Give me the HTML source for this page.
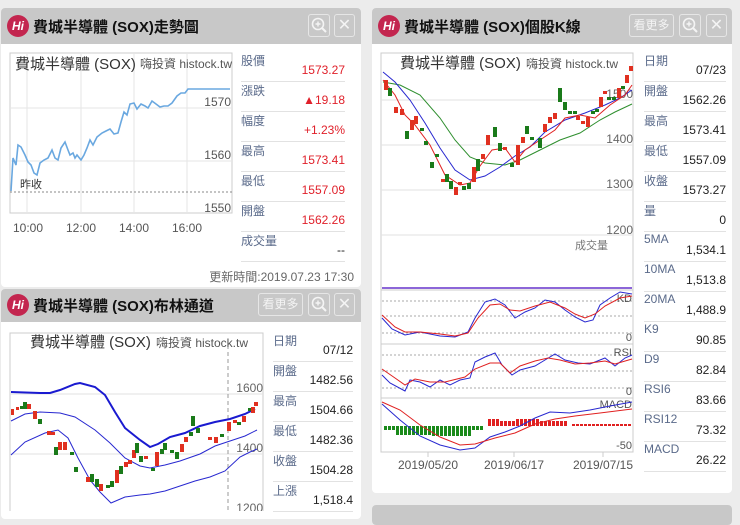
<!DOCTYPE html>
<html><head><meta charset="utf-8"><style>
*{margin:0;padding:0;box-sizing:border-box}
body{width:740px;height:511px;background:#ececec;font-family:"Liberation Sans","Noto Sans CJK TC",sans-serif;position:relative;overflow:hidden}
.p{position:absolute;background:#fff;border-radius:4px;overflow:hidden}
.h{position:absolute;left:0;right:0;top:0;height:36px;background:#c8c8c8}
.t{position:absolute;left:32px;top:8px;font-size:15px;font-weight:bold;color:#111;white-space:nowrap}
.logo{position:absolute;left:6px;top:7px;width:22px;height:22px;border-radius:50%;background:#c3264f;color:#fff;font-size:12px;font-weight:bold;text-align:center;line-height:22px;font-style:italic}
.b{position:absolute;top:6px;height:23px;border:1px solid #e6e6e6;border-radius:3px;color:#f4f4f4;font-size:12px;text-align:center;line-height:21px}
.b svg{position:absolute;left:2px;top:2px}
.a{position:absolute}
.s{position:absolute;font-size:12px}
.l{color:#5a6a8a}
.k{color:#222;text-align:right}
.v{color:#e0202a;text-align:right}
.r{position:relative;height:30px;border-bottom:1px solid #e2e2e2}
body>svg{position:absolute;left:0;top:0}
</style></head><body>

<div class="p" style="left:1px;top:8px;width:360px;height:279px">
<div class="h"></div><div class="logo">Hi</div><div class="t">費城半導體 (SOX)走勢圖</div>
<div class="b" style="left:307px;width:22px"><svg width="17" height="17"><circle cx="7" cy="7" r="5.5" fill="none" stroke="#f4f4f4" stroke-width="1.6"/><line x1="11" y1="11" x2="15" y2="15" stroke="#f4f4f4" stroke-width="2"/><line x1="4.5" y1="7" x2="9.5" y2="7" stroke="#f4f4f4" stroke-width="1.4"/><line x1="7" y1="4.5" x2="7" y2="9.5" stroke="#f4f4f4" stroke-width="1.4"/></svg></div>
<div class="b" style="left:333px;width:21px;font-size:16px">✕</div>
</div>
<div class="p" style="left:1px;top:289px;width:360px;height:230px">
<div class="h" style="height:33px"></div><div class="logo" style="top:5px">Hi</div><div class="t" style="top:6px">費城半導體 (SOX)布林通道</div>
<div class="b" style="left:257px;width:45px;top:4px">看更多</div>
<div class="b" style="left:307px;width:22px;top:4px"><svg width="17" height="17"><circle cx="7" cy="7" r="5.5" fill="none" stroke="#f4f4f4" stroke-width="1.6"/><line x1="11" y1="11" x2="15" y2="15" stroke="#f4f4f4" stroke-width="2"/><line x1="4.5" y1="7" x2="9.5" y2="7" stroke="#f4f4f4" stroke-width="1.4"/><line x1="7" y1="4.5" x2="7" y2="9.5" stroke="#f4f4f4" stroke-width="1.4"/></svg></div>
<div class="b" style="left:333px;width:21px;top:4px;font-size:16px">✕</div>
</div>
<div class="p" style="left:372px;top:8px;width:360px;height:485px">
<div class="h"></div><div class="logo">Hi</div><div class="t">費城半導體 (SOX)個股K線</div>
<div class="b" style="left:257px;width:45px">看更多</div>
<div class="b" style="left:307px;width:22px"><svg width="17" height="17"><circle cx="7" cy="7" r="5.5" fill="none" stroke="#f4f4f4" stroke-width="1.6"/><line x1="11" y1="11" x2="15" y2="15" stroke="#f4f4f4" stroke-width="2"/><line x1="4.5" y1="7" x2="9.5" y2="7" stroke="#f4f4f4" stroke-width="1.4"/><line x1="7" y1="4.5" x2="7" y2="9.5" stroke="#f4f4f4" stroke-width="1.4"/></svg></div>
<div class="b" style="left:334px;width:21px;font-size:16px">✕</div>
</div>
<div class="p" style="left:372px;top:505px;width:360px;height:20px"><div class="h"></div></div>

<svg width="740" height="511" font-family="Liberation Sans,Noto Sans CJK TC,sans-serif">
<defs>
<pattern id="pg" width="4" height="10" patternUnits="userSpaceOnUse"><rect width="3" height="10" fill="#1a8a1a"/></pattern>
<pattern id="pr" width="4" height="10" patternUnits="userSpaceOnUse"><rect width="3" height="10" fill="#e02020"/></pattern>
</defs>
<rect x="10" y="53" width="222" height="160" fill="#fff" stroke="#ccc"/>
<g stroke="#e6e6e6"><line x1="27" y1="53" x2="27" y2="213"/><line x1="81" y1="53" x2="81" y2="213"/><line x1="134" y1="53" x2="134" y2="213"/><line x1="187" y1="53" x2="187" y2="213"/><line x1="10" y1="108" x2="232" y2="108"/><line x1="10" y1="161" x2="232" y2="161"/></g>
<line x1="10" y1="192" x2="232" y2="192" stroke="#888" stroke-dasharray="2,2"/>
<text x="15" y="69" font-size="15" fill="#333">費城半導體 (SOX)</text>
<text x="140" y="68" font-size="12" fill="#555">嗨投資 histock.tw</text>
<text x="231" y="106" font-size="12" fill="#555" text-anchor="end">1570</text>
<text x="231" y="159" font-size="12" fill="#555" text-anchor="end">1560</text>
<text x="231" y="212" font-size="12" fill="#555" text-anchor="end">1550</text>
<text x="20" y="188" font-size="11" fill="#333">昨收</text>
<polyline fill="none" stroke="#6aa8e0" stroke-width="1.6" points="11,191 13,158 16,165 18,145 21,147 25,155 28,162 31,165 34,173 37,175 40,163 44,160 48,158 52,150 55,158 58,160 61,148 65,142 68,150 70,155 73,153 75,158 77,155 81,160 84,155 87,148 90,140 93,145 97,137 102,133 106,131 110,129 114,134 118,133 121,122 124,112 127,115 130,104 134,103 137,109 141,104 145,106 148,108 152,101 156,104 160,107 164,106 168,106 172,103 177,96 181,93 185,93 188,89 230,89"/>
<g font-size="12" fill="#555" text-anchor="middle"><text x="28" y="232">10:00</text><text x="81" y="232">12:00</text><text x="134" y="232">14:00</text><text x="187" y="232">16:00</text></g>

<rect x="381" y="53" width="252" height="399" fill="#fff" stroke="#ccc"/>
<g stroke="#e2e2e2"><line x1="381" y1="100" x2="633" y2="100"/><line x1="381" y1="145" x2="633" y2="145"/><line x1="381" y1="190" x2="633" y2="190"/><line x1="381" y1="235" x2="633" y2="235"/></g>
<text x="400" y="68" font-size="15" fill="#333">費城半導體 (SOX)</text>
<text x="526" y="68" font-size="12" fill="#555">嗨投資 histock.tw</text>
<g font-size="12" fill="#666" text-anchor="end"><text x="633" y="98">1500</text><text x="633" y="143">1400</text><text x="633" y="188">1300</text><text x="633" y="234">1200</text></g>
<text x="575" y="249" font-size="11" fill="#777">成交量</text>
<line x1="382" y1="288" x2="632" y2="288" stroke="#6633cc" stroke-width="1.5"/>
<line x1="381" y1="290" x2="633" y2="290" stroke="#ccc"/><line x1="381" y1="344" x2="633" y2="344" stroke="#ccc"/><line x1="381" y1="398" x2="633" y2="398" stroke="#ccc"/>
<g stroke="#aaa" stroke-dasharray="2,2"><line x1="382" y1="301" x2="632" y2="301"/><line x1="382" y1="316" x2="632" y2="316"/><line x1="382" y1="333" x2="632" y2="333"/><line x1="382" y1="355" x2="632" y2="355"/><line x1="382" y1="371" x2="632" y2="371"/><line x1="382" y1="388" x2="632" y2="388"/></g>
<polyline fill="none" stroke="#2f8f2f" points="383,82 400,85 420,95 440,118 455,140 470,157 485,163 505,165 520,160 540,150 560,140 580,133 600,120 615,112 632,104"/>
<polyline fill="none" stroke="#2828d0" points="383,72 395,82 410,100 425,123 440,148 455,170 470,180 485,176 500,167 515,156 530,147 545,132 565,120 585,113 605,105 620,98 632,90"/>
<polyline fill="none" stroke="#e02020" points="383,80 395,95 405,115 415,125 430,145 445,175 460,185 470,183 480,166 492,150 505,148 515,162 525,150 540,140 555,130 565,118 580,115 595,118 610,105 625,95 632,85"/>
<g>
<rect x="384" y="80" width="4" height="10" fill="#e03020"/><rect x="388" y="88" width="4" height="8" fill="#1a7a1a"/><rect x="394" y="107" width="4" height="6" fill="#e03020"/><rect x="400" y="109" width="4" height="6" fill="#e03020"/><rect x="405" y="131" width="4" height="8" fill="#1a7a1a"/><rect x="410" y="120" width="4" height="10" fill="#e03020"/><rect x="414" y="116" width="4" height="8" fill="#e03020"/><rect x="420" y="128" width="4" height="3" fill="#1a7a1a"/><rect x="424" y="141" width="4" height="4" fill="#1a7a1a"/><rect x="430" y="162" width="4" height="6" fill="#1a7a1a"/><rect x="435" y="154" width="4" height="3" fill="#1a7a1a"/><rect x="441" y="179" width="4" height="3" fill="#e03020"/><rect x="445" y="174" width="4" height="8" fill="#1a7a1a"/><rect x="449" y="181" width="4" height="8" fill="#1a7a1a"/><rect x="454" y="187" width="4" height="8" fill="#e03020"/><rect x="458" y="182" width="4" height="3" fill="#e03020"/><rect x="462" y="186" width="4" height="4" fill="#1a7a1a"/><rect x="467" y="183" width="4" height="6" fill="#1a7a1a"/><rect x="472" y="167" width="4" height="15" fill="#e03020"/><rect x="476" y="159" width="4" height="12" fill="#1a7a1a"/><rect x="481" y="154" width="4" height="5" fill="#e03020"/><rect x="486" y="135" width="4" height="10" fill="#e03020"/><rect x="493" y="127" width="4" height="10" fill="#1a7a1a"/><rect x="498" y="143" width="4" height="8" fill="#1a7a1a"/><rect x="503" y="147" width="4" height="3" fill="#e03020"/><rect x="510" y="163" width="4" height="4" fill="#1a7a1a"/><rect x="516" y="145" width="4" height="20" fill="#e03020"/><rect x="521" y="137" width="4" height="6" fill="#e03020"/><rect x="525" y="126" width="4" height="8" fill="#1a7a1a"/><rect x="530" y="137" width="4" height="3" fill="#1a7a1a"/><rect x="538" y="138" width="4" height="10" fill="#1a7a1a"/><rect x="543" y="124" width="4" height="8" fill="#e03020"/><rect x="548" y="117" width="4" height="6" fill="#e03020"/><rect x="553" y="113" width="4" height="6" fill="#e03020"/><rect x="558" y="88" width="4" height="14" fill="#1a7a1a"/><rect x="563" y="102" width="4" height="8" fill="#1a7a1a"/><rect x="568" y="111" width="4" height="3" fill="#1a7a1a"/><rect x="573" y="111" width="4" height="3" fill="#1a7a1a"/><rect x="576" y="116" width="4" height="4" fill="#e03020"/><rect x="581" y="121" width="4" height="3" fill="#e03020"/><rect x="586" y="117" width="4" height="10" fill="#e03020"/><rect x="591" y="111" width="4" height="3" fill="#1a7a1a"/><rect x="595" y="109" width="4" height="3" fill="#1a7a1a"/><rect x="599" y="97" width="4" height="10" fill="#e03020"/><rect x="603" y="91" width="4" height="3" fill="#e03020"/><rect x="607" y="97" width="4" height="3" fill="#1a7a1a"/><rect x="612" y="97" width="4" height="3" fill="#1a7a1a"/><rect x="617" y="88" width="4" height="10" fill="#e03020"/><rect x="621" y="86" width="4" height="3" fill="#1a7a1a"/><rect x="625" y="75" width="4" height="8" fill="#e03020"/><rect x="629" y="66" width="4" height="5" fill="#e03020"/>
</g>
<text x="632" y="302" font-size="11" fill="#555" text-anchor="end">KD</text><text x="632" y="341" font-size="11" fill="#555" text-anchor="end">0</text>
<polyline fill="none" stroke="#2828d0" points="382,318 392,329 405,335 420,332 440,336 455,337 468,332 475,318 485,302 495,299 505,305 515,318 525,312 535,308 545,300 555,302 565,310 575,317 585,322 593,320 600,305 610,298 620,292 632,294"/>
<polyline fill="none" stroke="#e02020" points="382,315 395,327 405,332 420,332 440,334 455,336 468,333 478,318 490,305 500,304 510,310 520,311 535,306 550,302 565,308 575,314 585,318 595,314 605,306 620,298 632,296"/>
<text x="632" y="356" font-size="11" fill="#555" text-anchor="end">RSI</text><text x="632" y="395" font-size="11" fill="#555" text-anchor="end">0</text>
<polyline fill="none" stroke="#2828d0" points="382,375 390,383 405,391 410,380 420,382 430,387 440,380 450,385 460,380 470,378 475,362 485,357 495,353 502,365 512,375 520,370 535,366 545,360 555,354 565,360 578,363 590,364 605,358 615,366 625,358 632,355"/>
<polyline fill="none" stroke="#e02020" points="382,369 395,378 405,385 415,379 430,382 445,382 465,377 475,369 490,363 500,363 510,373 520,366 535,361 548,358 560,360 575,364 590,363 605,361 615,364 632,359"/>
<text x="632" y="408" font-size="11" fill="#555" text-anchor="end">MACD</text><text x="632" y="449" font-size="11" fill="#555" text-anchor="end">-50</text>
<g fill="url(#pg)"><rect x="384" y="426" width="12" height="4"/><rect x="396" y="426" width="36" height="9"/><rect x="432" y="426" width="40" height="10"/><rect x="472" y="426" width="12" height="4"/></g>
<g fill="url(#pr)"><rect x="488" y="419" width="12" height="7"/><rect x="500" y="421" width="16" height="5"/><rect x="516" y="419" width="24" height="7"/><rect x="540" y="421" width="28" height="5"/><rect x="572" y="424" width="60" height="2"/></g>
<polyline fill="none" stroke="#2828d0" points="382,404 400,420 420,436 440,445 460,450 475,448 490,437 505,432 520,426 535,418 550,412 570,413 590,410 610,406 632,402"/>
<polyline fill="none" stroke="#e02020" points="382,402 400,410 420,425 440,437 460,445 475,444 495,438 515,433 535,424 555,419 575,416 600,413 632,409"/>
<g stroke="#ccc"><line x1="428" y1="452" x2="428" y2="457"/><line x1="514" y1="452" x2="514" y2="457"/><line x1="603" y1="452" x2="603" y2="457"/></g>
<g font-size="12" fill="#555" text-anchor="middle"><text x="428" y="469">2019/05/20</text><text x="514" y="469">2019/06/17</text><text x="603" y="469">2019/07/15</text></g>

<rect x="10" y="333" width="253" height="190" fill="#fff" stroke="#ccc"/>
<g stroke="#e2e2e2"><line x1="10" y1="394" x2="263" y2="394"/><line x1="10" y1="454" x2="263" y2="454"/></g>
<line x1="228" y1="345" x2="228" y2="511" stroke="#999" stroke-dasharray="4,3"/>
<text x="30" y="347" font-size="15" fill="#333">費城半導體 (SOX)</text>
<text x="156" y="347" font-size="12" fill="#555">嗨投資 histock.tw</text>
<g font-size="12" fill="#666" text-anchor="end"><text x="263" y="392">1600</text><text x="263" y="452">1400</text><text x="263" y="512">1200</text></g>
<polyline fill="none" stroke="#1a1ad0" stroke-width="2" points="11,392 40,393 50,393 60,390 75,384 80,383 95,387 105,395 115,412 125,428 140,440 150,447 158,444 170,437 185,433 200,426 215,422 230,419 245,414 255,409"/>
<polyline fill="none" stroke="#2828d0" points="11,421 25,414 40,412 60,413 75,417 95,430 110,443 125,458 140,466 150,468 165,465 180,461 200,454 215,446 230,441 245,436 257,430"/>
<polyline fill="none" stroke="#2828d0" points="11,455 25,442 45,433 58,430 68,438 78,458 90,480 100,492 111,503 125,497 140,495 150,494 165,491 180,486 195,481 210,477 225,471 240,457 250,452 257,449"/>
<g>
<rect x="11" y="409" width="3" height="6" fill="#e03020"/><rect x="16" y="407" width="3" height="3" fill="#e03020"/><rect x="20" y="406" width="3" height="3" fill="#1a7a1a"/><rect x="23" y="402" width="4" height="7" fill="#1a7a1a"/><rect x="27" y="404" width="4" height="5" fill="#e03020"/><rect x="33" y="411" width="4" height="8" fill="#e03020"/><rect x="38" y="419" width="4" height="5" fill="#1a7a1a"/><rect x="47" y="431" width="4" height="4" fill="#e03020"/><rect x="51" y="432" width="4" height="3" fill="#e03020"/><rect x="54" y="447" width="4" height="8" fill="#1a7a1a"/><rect x="58" y="442" width="4" height="8" fill="#e03020"/><rect x="63" y="442" width="4" height="8" fill="#e03020"/><rect x="70" y="452" width="4" height="3" fill="#1a7a1a"/><rect x="74" y="467" width="4" height="5" fill="#1a7a1a"/><rect x="86" y="477" width="4" height="5" fill="#e03020"/><rect x="90" y="474" width="4" height="8" fill="#1a7a1a"/><rect x="95" y="479" width="4" height="8" fill="#1a7a1a"/><rect x="99" y="484" width="4" height="7" fill="#e03020"/><rect x="106" y="485" width="4" height="3" fill="#1a7a1a"/><rect x="110" y="481" width="4" height="6" fill="#1a7a1a"/><rect x="115" y="470" width="4" height="13" fill="#e03020"/><rect x="119" y="466" width="4" height="8" fill="#1a7a1a"/><rect x="124" y="462" width="4" height="5" fill="#e03020"/><rect x="128" y="460" width="4" height="4" fill="#e03020"/><rect x="132" y="450" width="4" height="8" fill="#e03020"/><rect x="135" y="443" width="4" height="10" fill="#1a7a1a"/><rect x="139" y="456" width="4" height="6" fill="#1a7a1a"/><rect x="144" y="456" width="4" height="3" fill="#e03020"/><rect x="151" y="468" width="4" height="3" fill="#1a7a1a"/><rect x="155" y="452" width="4" height="14" fill="#e03020"/><rect x="160" y="449" width="4" height="5" fill="#1a7a1a"/><rect x="163" y="443" width="4" height="7" fill="#1a7a1a"/><rect x="170" y="450" width="4" height="3" fill="#1a7a1a"/><rect x="175" y="452" width="4" height="7" fill="#1a7a1a"/><rect x="180" y="444" width="4" height="8" fill="#e03020"/><rect x="184" y="437" width="4" height="5" fill="#e03020"/><rect x="189" y="432" width="4" height="4" fill="#1a7a1a"/><rect x="191" y="416" width="4" height="10" fill="#1a7a1a"/><rect x="196" y="428" width="4" height="5" fill="#1a7a1a"/><rect x="208" y="437" width="4" height="3" fill="#e03020"/><rect x="214" y="437" width="4" height="6" fill="#e03020"/><rect x="220" y="434" width="4" height="3" fill="#1a7a1a"/><rect x="227" y="422" width="4" height="9" fill="#e03020"/><rect x="233" y="420" width="4" height="3" fill="#e03020"/><rect x="237" y="422" width="4" height="3" fill="#1a7a1a"/><rect x="242" y="416" width="4" height="6" fill="#e03020"/><rect x="248" y="408" width="4" height="3" fill="#1a7a1a"/><rect x="251" y="407" width="4" height="6" fill="#e03020"/><rect x="254" y="402" width="4" height="4" fill="#e03020"/>
</g>
</svg>

<div class="a" style="left:241px;top:52px;width:104px;font-size:12px">
<div class="r"><span class="s l">股價</span><span class="s v" style="right:0;top:11px">1573.27</span></div>
<div class="r"><span class="s l">漲跌</span><span class="s v" style="right:0;top:11px">▲19.18</span></div>
<div class="r"><span class="s l">幅度</span><span class="s v" style="right:0;top:11px">+1.23%</span></div>
<div class="r"><span class="s l">最高</span><span class="s v" style="right:0;top:11px">1573.41</span></div>
<div class="r"><span class="s l">最低</span><span class="s v" style="right:0;top:11px">1557.09</span></div>
<div class="r"><span class="s l">開盤</span><span class="s v" style="right:0;top:11px">1562.26</span></div>
<div class="r"><span class="s l">成交量</span><span class="s k" style="right:0;top:11px">--</span></div>
</div>
<div class="a" style="right:386px;top:268px;font-size:12px;color:#666">更新時間:2019.07.23 17:30</div>

<div class="a" style="left:644px;top:52px;width:82px;font-size:12px">
<div class="r"><span class="s l">日期</span><span class="s k" style="right:0;top:11px">07/23</span></div>
<div class="r"><span class="s l">開盤</span><span class="s k" style="right:0;top:11px">1562.26</span></div>
<div class="r"><span class="s l">最高</span><span class="s k" style="right:0;top:11px">1573.41</span></div>
<div class="r"><span class="s l">最低</span><span class="s k" style="right:0;top:11px">1557.09</span></div>
<div class="r"><span class="s l">收盤</span><span class="s k" style="right:0;top:11px">1573.27</span></div>
<div class="r"><span class="s l">量</span><span class="s k" style="right:0;top:11px">0</span></div>
<div class="r"><span class="s l">5MA</span><span class="s k" style="right:0;top:11px">1,534.1</span></div>
<div class="r"><span class="s l">10MA</span><span class="s k" style="right:0;top:11px">1,513.8</span></div>
<div class="r"><span class="s l">20MA</span><span class="s k" style="right:0;top:11px">1,488.9</span></div>
<div class="r"><span class="s l">K9</span><span class="s k" style="right:0;top:11px">90.85</span></div>
<div class="r"><span class="s l">D9</span><span class="s k" style="right:0;top:11px">82.84</span></div>
<div class="r"><span class="s l">RSI6</span><span class="s k" style="right:0;top:11px">83.66</span></div>
<div class="r"><span class="s l">RSI12</span><span class="s k" style="right:0;top:11px">73.32</span></div>
<div class="r"><span class="s l">MACD</span><span class="s k" style="right:0;top:11px">26.22</span></div>
</div>

<div class="a" style="left:273px;top:332px;width:80px;font-size:12px">
<div class="r"><span class="s l">日期</span><span class="s k" style="right:0;top:11px">07/12</span></div>
<div class="r"><span class="s l">開盤</span><span class="s k" style="right:0;top:11px">1482.56</span></div>
<div class="r"><span class="s l">最高</span><span class="s k" style="right:0;top:11px">1504.66</span></div>
<div class="r"><span class="s l">最低</span><span class="s k" style="right:0;top:11px">1482.36</span></div>
<div class="r"><span class="s l">收盤</span><span class="s k" style="right:0;top:11px">1504.28</span></div>
<div class="r"><span class="s l">上漲</span><span class="s k" style="right:0;top:11px">1,518.4</span></div>
</div>
</body></html>
